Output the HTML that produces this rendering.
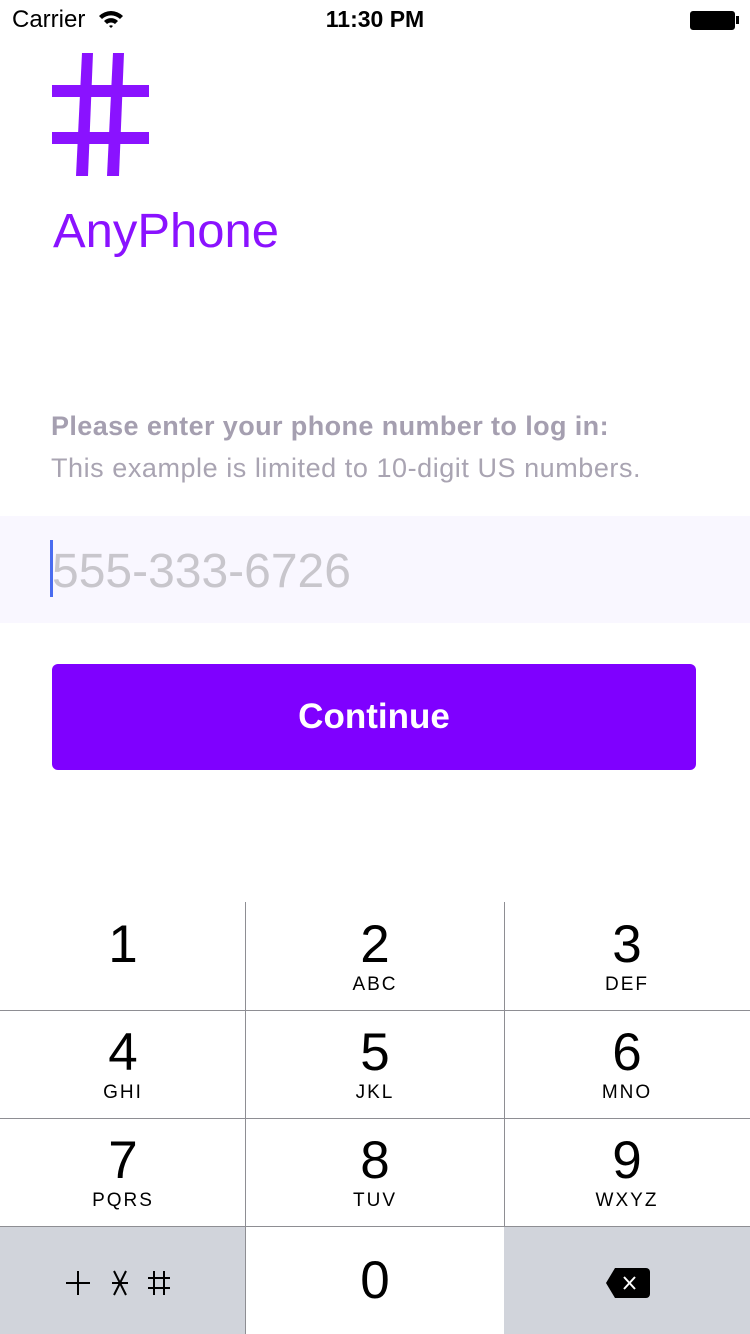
<!DOCTYPE html>
<html><head><meta charset="utf-8"><style>
*{margin:0;padding:0;box-sizing:border-box}
body{width:750px;height:1334px;background:#fff;position:relative;overflow:hidden;font-family:"Liberation Sans",sans-serif}
.a{position:absolute}
.sb{font-size:24px;color:#000;top:6px}
.key{position:absolute;width:245px;height:108px;text-align:center;border-top:1px solid #8e8e93}
.d{font-size:53px;line-height:55px;padding-top:14px;color:#000}
.l{font-size:19px;letter-spacing:2px;margin-top:2px;color:#000}
</style></head><body>
<div class="a sb" style="left:12px">Carrier</div>
<svg class="a" style="left:98px;top:9px" width="26" height="20" viewBox="0 0 26 20"><path d="M1 7 A17 17 0 0 1 25 7 L22 10 A13 13 0 0 0 4 10Z M6 12 A10 10 0 0 1 20 12 L17 15 A6 6 0 0 0 9 15Z M11 17 L13 19 L15 17 A3 3 0 0 0 11 17Z" fill="#000"/></svg>
<div class="a sb" style="left:0;width:750px;text-align:center;font-weight:bold;font-size:23px">11:30 PM</div>
<div class="a" style="left:690px;top:11px;width:45px;height:19px;border:1.5px solid #000;border-radius:3px;background:#000"></div>
<div class="a" style="left:736px;top:16px;width:3px;height:8px;background:#000"></div>
<svg class="a" style="left:0;top:0" width="200" height="200"><g fill="#8a12ff"><polygon points="82,53 93,53 88,176 76,176"/><polygon points="113,53 124,53 119,176 107,176"/><rect x="52" y="85" width="97" height="12"/><rect x="52" y="132" width="97" height="12"/></g></svg>
<div class="a" style="left:53px;top:204px;font-size:48px;color:#8a12ff;transform:scaleX(1.02);transform-origin:left">AnyPhone</div>
<div class="a" style="left:51px;top:411px;font-size:27px;font-weight:bold;color:#a59fb0;letter-spacing:0.4px">Please enter your phone number to log in:</div>
<div class="a" style="left:51px;top:453px;font-size:27px;color:#a9a4b2;letter-spacing:0.55px">This example is limited to 10-digit US numbers.</div>
<div class="a" style="left:0;top:516px;width:750px;height:107px;background:#f9f7ff"></div>
<div class="a" style="left:50px;top:540px;width:3px;height:57px;background:#4a6cf0"></div>
<div class="a" style="left:52px;top:544px;font-size:48px;color:#c8c6cc">555-333-6726</div>
<div class="a" style="left:52px;top:664px;width:644px;height:106px;background:#7f00ff;border-radius:6px;color:#fff;font-size:35px;font-weight:bold;text-align:center;line-height:106px">Continue</div>
<div class="key" style="left:0;top:902px;width:246px;border-top:none"><div class="d" style="padding-top:15px">1</div></div>
<div class="key" style="left:245px;top:902px;width:260px;border-left:1px solid #8e8e93;border-right:1px solid #8e8e93;border-top:none"><div class="d" style="padding-top:15px">2</div><div class="l">ABC</div></div>
<div class="key" style="left:504px;top:902px;width:246px;border-top:none"><div class="d" style="padding-top:15px">3</div><div class="l">DEF</div></div>
<div class="key" style="left:0;top:1010px;width:246px"><div class="d">4</div><div class="l">GHI</div></div>
<div class="key" style="left:245px;top:1010px;width:260px;border-left:1px solid #8e8e93;border-right:1px solid #8e8e93"><div class="d">5</div><div class="l">JKL</div></div>
<div class="key" style="left:504px;top:1010px;width:246px"><div class="d">6</div><div class="l">MNO</div></div>
<div class="key" style="left:0;top:1118px;width:246px"><div class="d">7</div><div class="l">PQRS</div></div>
<div class="key" style="left:245px;top:1118px;width:260px;border-left:1px solid #8e8e93;border-right:1px solid #8e8e93"><div class="d">8</div><div class="l">TUV</div></div>
<div class="key" style="left:504px;top:1118px;width:246px"><div class="d">9</div><div class="l">WXYZ</div></div>
<div class="key" style="left:0;top:1226px;width:246px;background:#d1d4db"></div>
<div class="key" style="left:245px;top:1226px;width:260px;border-left:1px solid #8e8e93;border-right:1px solid #8e8e93"><div class="d" style="padding-top:26px">0</div></div>
<div class="key" style="left:504px;top:1226px;width:246px;background:#d1d4db"></div>
<svg class="a" style="left:60px;top:1262px" width="120" height="40" viewBox="0 0 120 40"><g stroke="#000" stroke-width="2" fill="none"><path d="M6 21H30M18 9V33M54 9L66 33M66 9L54 33M52 21H68M94 9V33M104 9V33M88 16H110M88 26H110"/></g></svg>
<svg class="a" style="left:604px;top:1266px" width="48" height="34" viewBox="0 0 48 34"><path d="M11 2H42A4 4 0 0 1 46 6V28A4 4 0 0 1 42 32H11L2 17Z" fill="#000"/><path d="M20 11L31 23M31 11L20 23" stroke="#fff" stroke-width="2"/></svg>
</body></html>
